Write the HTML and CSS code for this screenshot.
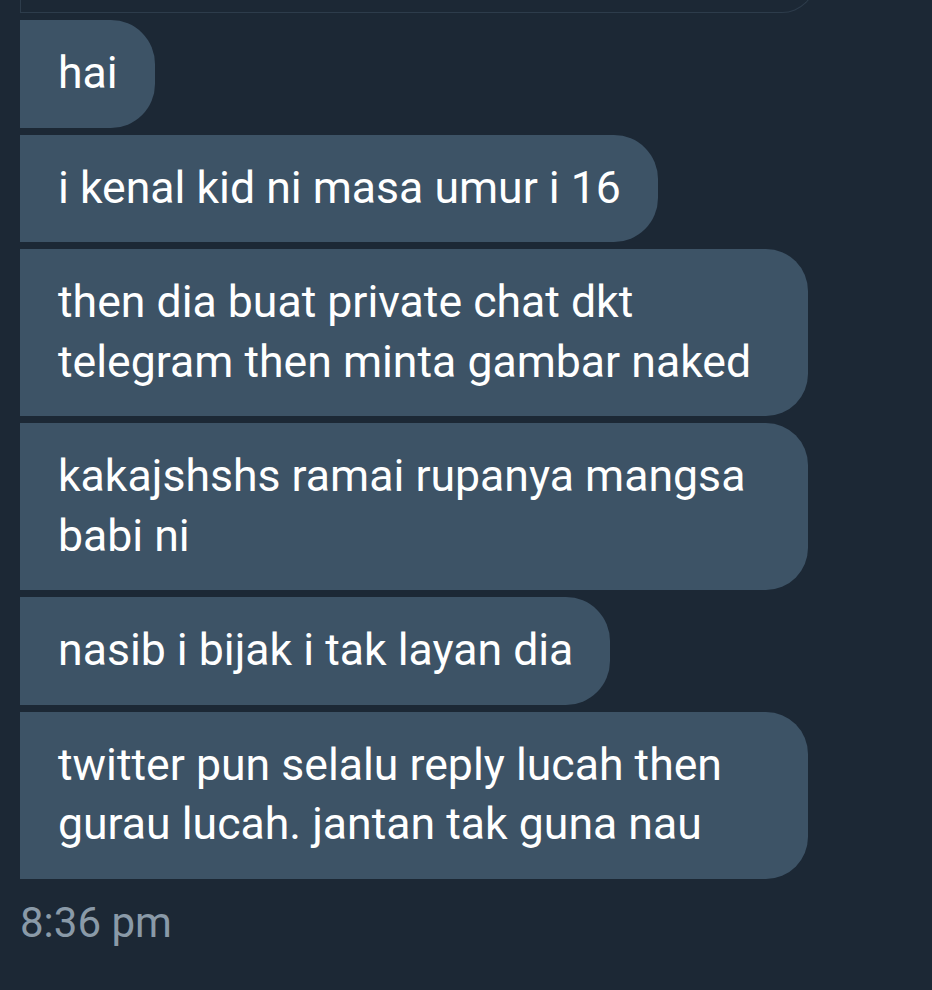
FILE: index.html
```html
<!DOCTYPE html>
<html>
<head>
<meta charset="utf-8">
<link rel="stylesheet" href="styles.css">
</head>
<body>
<div class="screen">
  <div class="prev-card"></div>
  <div class="thread">
    <div class="bubble">hai</div>
    <div class="bubble">i kenal kid ni masa umur i 16</div>
    <div class="bubble multi">then dia buat private chat dkt<br>telegram then minta gambar naked</div>
    <div class="bubble multi">kakajshshs ramai rupanya mangsa<br>babi ni</div>
    <div class="bubble">nasib i bijak i tak layan dia</div>
    <div class="bubble multi">twitter pun selalu reply lucah then<br>gurau lucah. jantan tak guna nau</div>
  </div>
  <div class="time">8:36 pm</div>
</div>
</body>
</html>
```
FILE: styles.css
```css
html, body {
  margin: 0;
  padding: 0;
  background: #1c2835;
}
.screen {
  width: 932px;
  height: 990px;
  overflow: hidden;
  font-family: Roboto, "Noto Sans", sans-serif;
  background: #1c2835;
}
.prev-card {
  margin-top: -58px;
  margin-left: 20px;
  width: 794px;
  height: 70px;
  border: 1px solid #2d3c4b;
  border-top: none;
  border-radius: 0 0 34px 0;
}
.thread {
  margin-top: 7px;
  display: flex;
  flex-direction: column;
  align-items: flex-start;
  gap: 7px;
  padding-left: 20px;
}
.bubble {
  background: #3d5366;
  color: #ffffff;
  font-size: 44.6px;
  line-height: 59.5px;
  padding: 24px 37px 24px 38px;
  border-radius: 0 44px 44px 0;
  white-space: nowrap;
}
.bubble.multi {
  box-sizing: border-box;
  width: 788px;
  border-radius: 0 42px 42px 0;
}
.time {
  margin-top: 20px;
  padding-left: 20px;
  color: #8a9aa8;
  font-size: 42px;
  line-height: 48px;
}
```
